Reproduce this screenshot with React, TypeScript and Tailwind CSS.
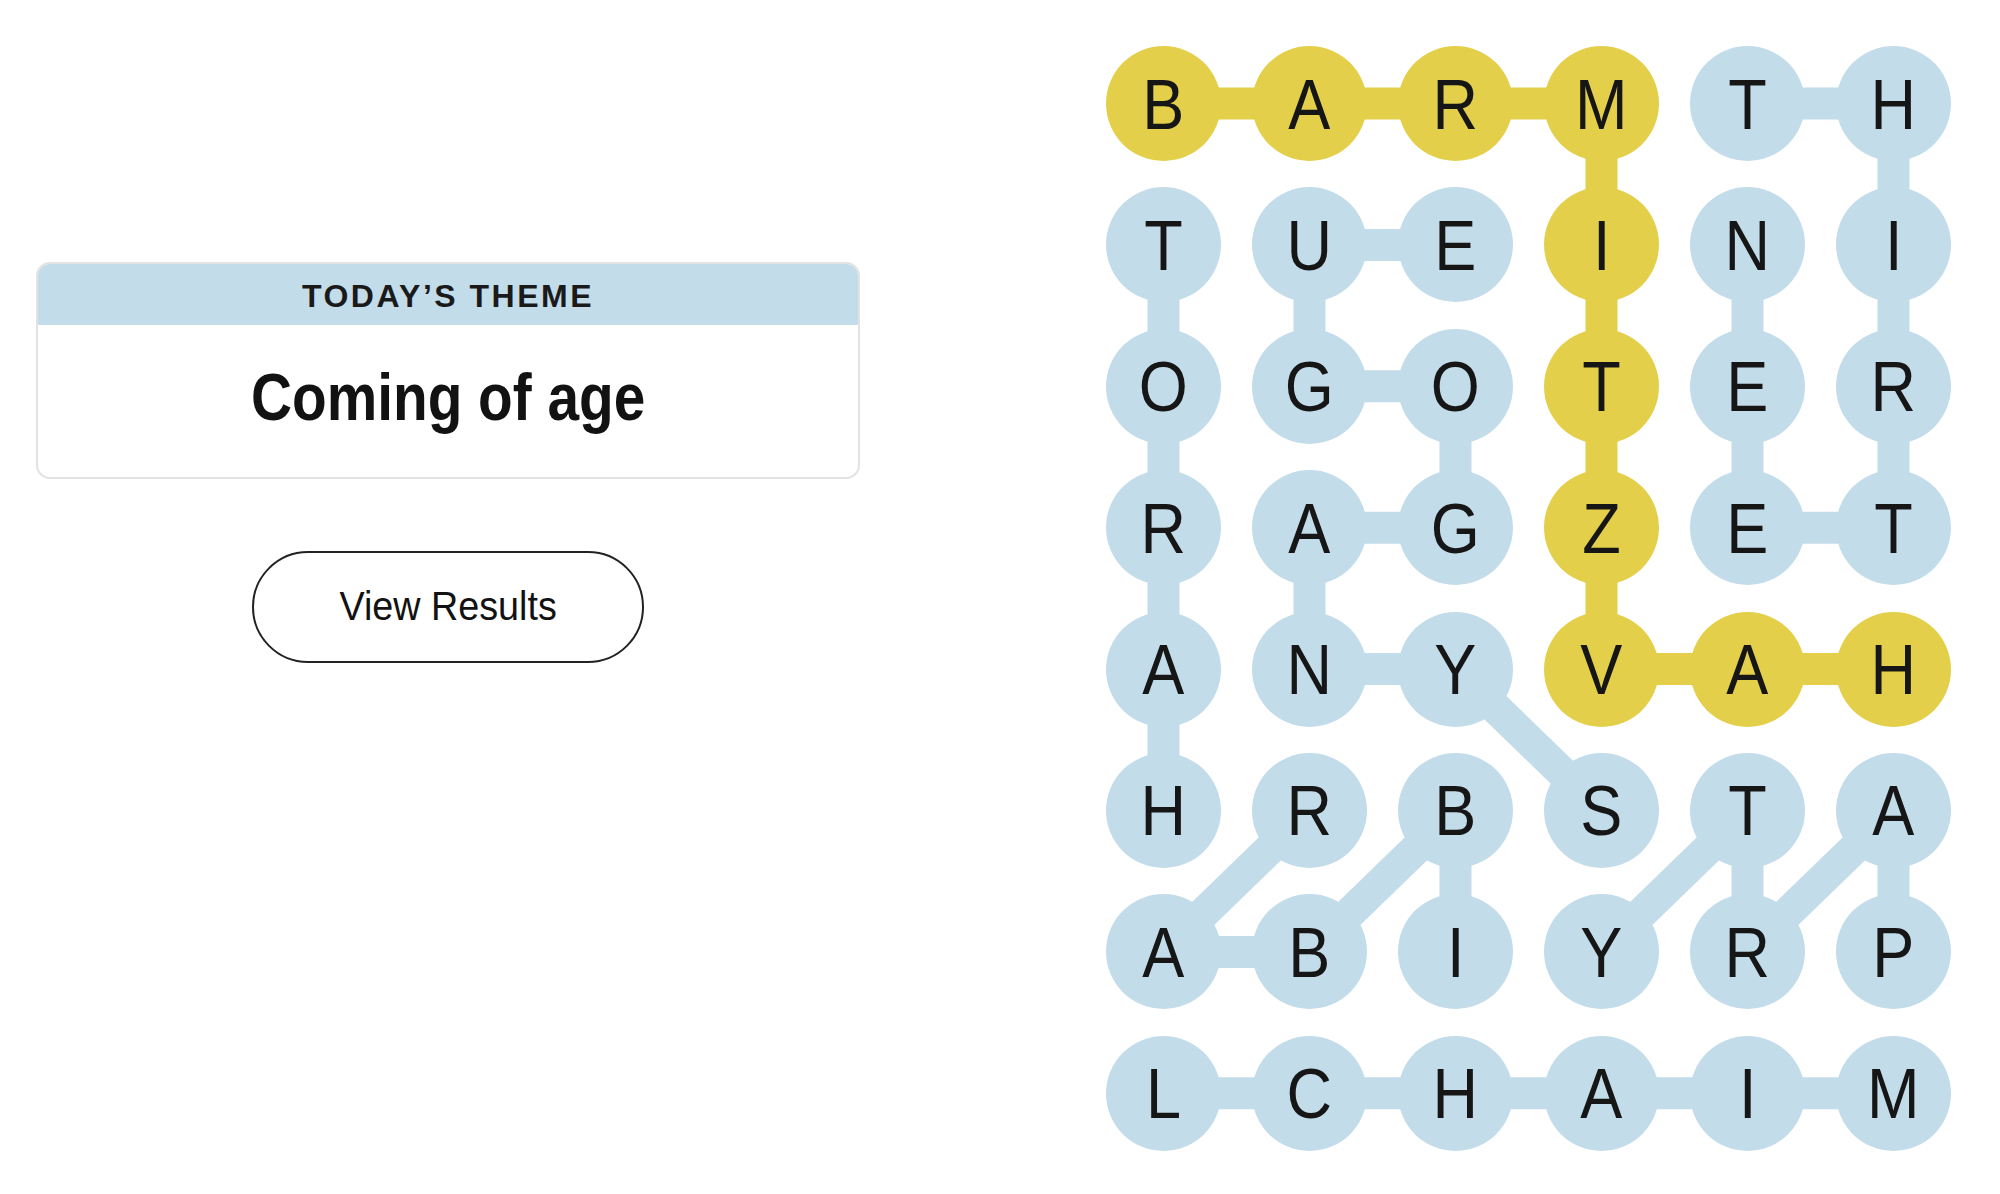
import React from 'react'

const GRID = [
    'BARMTH',
    'TUEINI',
    'OGOTER',
    'RAGZET',
    'ANYVAH',
    'HRBSTA',
    'ABIYRP',
    'LCHAIM',
]

// [row, col] paths, letter by letter
const SPANGRAM: [number, number][] = [
    [0, 0], [0, 1], [0, 2], [0, 3], [1, 3], [2, 3], [3, 3], [4, 3], [4, 4], [4, 5],
]

const WORDS: [number, number][][] = [
    [[0, 4], [0, 5], [1, 5], [2, 5], [3, 5], [3, 4], [2, 4], [1, 4]],
    [[1, 0], [2, 0], [3, 0], [4, 0], [5, 0]],
    [[5, 3], [4, 2], [4, 1], [3, 1], [3, 2], [2, 2], [2, 1], [1, 1], [1, 2]],
    [[5, 1], [6, 0], [6, 1], [5, 2], [6, 2]],
    [[6, 5], [5, 5], [6, 4], [5, 4], [6, 3]],
    [[7, 0], [7, 1], [7, 2], [7, 3], [7, 4], [7, 5]],
]

const CELL = 115
const GAP_X = 31
const GAP_Y = 26.4
const BLUE = '#c3dcea'
const YELLOW = '#e4cf4a'

const cx = (c: number) => c * (CELL + GAP_X) + CELL / 2
const cy = (r: number) => r * (CELL + GAP_Y) + CELL / 2

function Lines({ path, color }: { path: [number, number][]; color: string }) {
    return (
        <>
            {path.slice(1).map(([r, c], i) => {
                const [pr, pc] = path[i]
                return (
                    <line
                        key={i}
                        x1={cx(pc)}
                        y1={cy(pr)}
                        x2={cx(c)}
                        y2={cy(r)}
                        stroke={color}
                        strokeWidth={32}
                    />
                )
            })}
        </>
    )
}

function Board() {
    const yellowSet = new Set(SPANGRAM.map(([r, c]) => `${r}-${c}`))
    const width = 6 * CELL + 5 * GAP_X
    const height = 8 * CELL + 7 * GAP_Y

    return (
        <div className="relative">
            <svg className="absolute inset-0" width={width} height={height}>
                {WORDS.map((w, i) => (
                    <Lines key={i} path={w} color={BLUE} />
                ))}
                <Lines path={SPANGRAM} color={YELLOW} />
            </svg>
            <div className="relative grid grid-cols-[repeat(6,115px)] gap-x-[31px] gap-y-[26.4px]">
                {GRID.map((row, r) =>
                    row.split('').map((ch, c) => (
                        <div
                            key={`${r}-${c}`}
                            className={`w-[115px] h-[115px] rounded-full flex items-center justify-center text-[70px] leading-none text-[#161616] ${
                                yellowSet.has(`${r}-${c}`) ? 'bg-[#e4cf4a]' : 'bg-[#c3dcea]'
                            }`}
                        >
                            <span className="scale-x-[0.9] translate-y-[1px]">{ch}</span>
                        </div>
                    ))
                )}
            </div>
        </div>
    )
}

export default function App() {
    return (
        <div className="min-h-screen bg-white flex items-start pt-[46px] font-['Liberation_Sans',Arial,sans-serif] text-[#121212]">
            <div className="ml-[36px] w-[824px] pt-[216px] flex flex-col items-center">
                <div className="w-full rounded-[14px] border-2 border-[#e2e2e2] overflow-hidden">
                    <div className="h-[61px] bg-[#c3dcea] flex items-center justify-center">
                        <span className="text-[32px] font-semibold tracking-[2.5px] text-[#1a1a1a] pt-[2px]">TODAY’S THEME</span>
                    </div>
                    <div className="h-[152px] flex items-center justify-center pb-[8px]">
                        <span className="text-[66px] font-bold leading-none scale-x-[0.86]">Coming of age</span>
                    </div>
                </div>
                <button
                    type="button"
                    className="mt-[72px] w-[392px] h-[112px] rounded-full border-[2.5px] border-[#222] bg-white text-[41px] text-[#121212] flex items-center justify-center"
                >
                    <span className="scale-x-[0.92]">View Results</span>
                </button>
            </div>
            <div className="ml-[246px]">
                <Board />
            </div>
        </div>
    )
}
